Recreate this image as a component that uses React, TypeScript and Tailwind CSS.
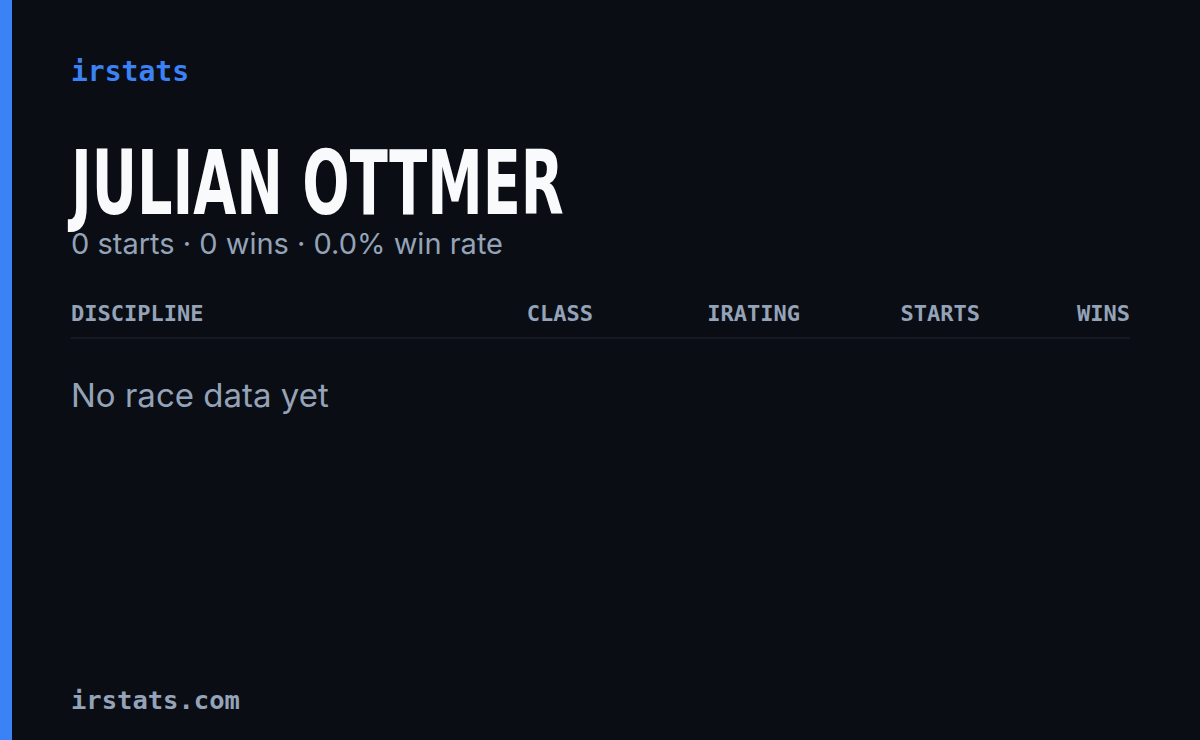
export default function App() {
  const mono = { fontFamily: '"DejaVu Sans Mono", "Liberation Mono", monospace' };
  const cols = [
    { label: "CLASS", w: "w-[180px]" },
    { label: "IRATING", w: "w-[207px]" },
    { label: "STARTS", w: "w-[180px]" },
    { label: "WINS", w: "w-[150px]" },
  ];

  return (
    <div className="flex h-[740px] w-[1200px] bg-[#0a0d14]" style={{ fontFamily: 'Inter, "Open Sans", sans-serif' }}>
      <div className="w-[12px] shrink-0 bg-[#3b82f6]" />
      <div className="flex flex-1 flex-col pl-[59px] pr-[70px] pt-[56px] pb-[24px]">
        <div className="text-[28px] leading-[32px] font-bold text-[#3b82f6]" style={mono}>
          irstats
        </div>

        <h1
          className="mt-[55px] text-[89px] leading-[80px] font-bold text-[#f8fafc]"
          style={{ fontFamily: '"DejaVu Sans Condensed", sans-serif' }}
        >
          <span className="inline-block origin-left scale-x-[0.696] whitespace-nowrap">JULIAN OTTMER</span>
        </h1>
        <p className="mt-[5px] text-[29px] leading-[32px] text-[#94a3b8]">
          0 starts · 0 wins · 0.0% win rate
        </p>

        <div className="mt-[40px] flex border-b-2 border-[#151a24] pb-[9px] text-[22px] leading-[28px] font-bold text-[#94a3b8]" style={mono}>
          <div className="flex-1">DISCIPLINE</div>
          {cols.map((c) => (
            <div key={c.label} className={`${c.w} text-right`}>
              {c.label}
            </div>
          ))}
        </div>

        <p className="mt-[36px] text-[33px] leading-[40px] text-[#94a3b8]">No race data yet</p>

        <div className="mt-auto text-[25.5px] leading-[32px] font-bold text-[#94a3b8]" style={mono}>
          irstats.com
        </div>
      </div>
    </div>
  );
}
